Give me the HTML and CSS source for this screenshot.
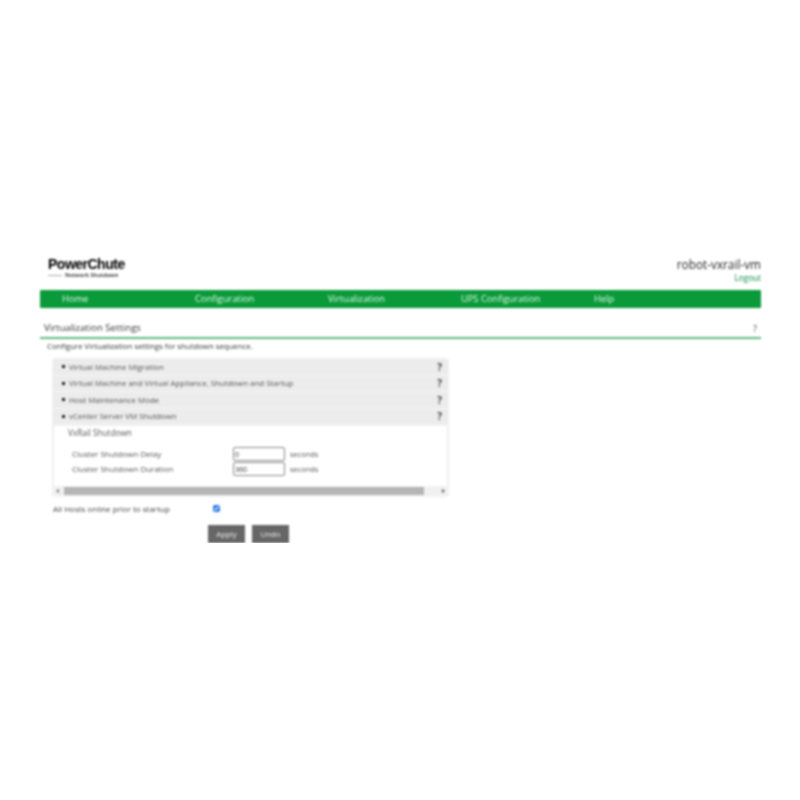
FILE: index.html
```html
<!DOCTYPE html>
<html lang="en">
<head>
<meta charset="utf-8">
<title>PowerChute - Virtualization Settings</title>
<link rel="stylesheet" href="styles.css">
</head>
<body>
<div class="page">
  <header class="top">
    <div class="logo">
      <div class="logo-name">PowerChute</div>
      <div class="logo-sub"><span class="logo-dash"></span>Network Shutdown</div>
    </div>
    <div class="user">
      <div class="host">robot-vxrail-vm</div>
      <a class="logout">Logout</a>
    </div>
  </header>
  <nav class="nav">
    <a class="nav-item">Home</a>
    <a class="nav-item">Configuration</a>
    <a class="nav-item">Virtualization</a>
    <a class="nav-item">UPS Configuration</a>
    <a class="nav-item">Help</a>
  </nav>
  <div class="title-row">
    <h1 class="title">Virtualization Settings</h1>
    <span class="title-help">?</span>
  </div>
  <p class="intro">Configure Virtualization settings for shutdown sequence.</p>
  <section class="panel">
    <div class="acc-row"><span class="acc-label"><span class="bullet"></span>Virtual Machine Migration</span><span class="qm">?</span></div>
    <div class="acc-row"><span class="acc-label"><span class="bullet"></span>Virtual Machine and Virtual Appliance, Shutdown and Startup</span><span class="qm">?</span></div>
    <div class="acc-row"><span class="acc-label"><span class="bullet"></span>Host Maintenance Mode</span><span class="qm">?</span></div>
    <div class="acc-row"><span class="acc-label"><span class="bullet"></span>vCenter Server VM Shutdown</span><span class="qm">?</span></div>
    <div class="acc-body">
      <div class="sub-title">VxRail Shutdown</div>
      <div class="fields">
        <label class="field-label">Cluster Shutdown Delay</label>
        <input class="field-input" type="text" value="0">
        <span class="unit">seconds</span>
        <label class="field-label">Cluster Shutdown Duration</label>
        <input class="field-input" type="text" value="360">
        <span class="unit">seconds</span>
      </div>
    </div>
    <div class="scrollbar">
      <span class="arrow-left"></span>
      <span class="thumb"></span>
      <span class="arrow-right"></span>
    </div>
  </section>
  <div class="check-row">
    <span class="check-label">All Hosts online prior to startup</span>
    <input class="check" type="checkbox" checked>
  </div>
  <div class="actions">
    <button class="btn" type="button">Apply</button>
    <button class="btn" type="button">Undo</button>
  </div>
</div>
</body>
</html>
```

FILE: styles.css
```css
* { box-sizing: border-box; }
html, body { margin: 0; background: #fff; }
body { font-family: "Open Sans", "Liberation Sans", sans-serif; color: #444; }
.page { padding: 255px 39px 0 40px; filter: blur(0.8px); }

.top { display: flex; justify-content: space-between; align-items: flex-start; height: 35px; padding-left: 8px; }
.logo-name { font-family: "Liberation Sans", sans-serif; font-size: 14px; font-weight: 700; line-height: 18px; letter-spacing: -0.5px; color: #000; }
.logo-sub { display: flex; align-items: center; gap: 3px; font-size: 5.5px; font-weight: 700; line-height: 5px; color: #444; white-space: nowrap; }
.logo-dash { width: 14px; height: 1px; background: #aaa; }
.user { text-align: right; }
.host { font-size: 11.8px; line-height: 12px; color: #222; margin-top: 2.5px; }
.logout { display: block; font-size: 8.2px; line-height: 9px; color: #0a8a40; margin-top: 3.2px; }

.nav { display: grid; grid-template-columns: repeat(4, 133px) 1fr; align-items: center; height: 18px; padding-left: 22px; background: #0a9a3a; border-radius: 1px; }
.nav-item { font-size: 9.3px; line-height: 18px; color: #e8fbee; }

.title-row { display: flex; justify-content: space-between; align-items: center; height: 31px; padding: 11px 4px 0 4px; border-bottom: 2px solid #5cb983; }
.title { margin: 0; font-size: 9.6px; font-weight: 400; line-height: 14px; color: #333; }
.title-help { font-size: 9px; color: #444; }
.intro { margin: 2px 0 0 7px; font-size: 7.8px; line-height: 10px; color: #333; }

.panel { width: 395px; margin: 8px 0 0 13px; box-shadow: 0 0 2px #ddd; }
.acc-row { display: flex; justify-content: space-between; align-items: center; height: 16.5px; padding: 0 6px 0 9px; background: #ececec; border-bottom: 1px solid #f6f6f6; }
.acc-label { display: flex; align-items: center; gap: 4px; font-size: 7.9px; color: #555; white-space: nowrap; }
.bullet { width: 3px; height: 3px; background: #222; }
.qm { font-size: 10px; font-weight: 700; color: #444; }

.acc-body { height: 61px; padding: 1px 0 0 14px; background: #fff; border: 1px solid #eee; border-bottom: 0; }
.sub-title { font-size: 8.2px; line-height: 12px; color: #555; }
.fields { display: grid; grid-template-columns: 157px 53px auto; column-gap: 4px; row-gap: 1px; align-items: center; justify-content: start; margin-top: 8px; padding-left: 4px; }
.field-label { font-size: 8px; line-height: 12px; color: #555; }
.field-input { width: 52px; height: 14px; padding: 0 1px; border: 1px solid #888; border-radius: 2px; font-family: inherit; font-size: 7px; color: #333; background: #fff; }
.unit { font-size: 7.4px; color: #555; }

.scrollbar { display: flex; align-items: center; height: 10px; padding: 0 3px; background: #f1f1f1; }
.thumb { flex: 1; height: 8px; margin: 0 18px 0 5px; background: #b5b5b5; }
.arrow-left { border-style: solid; border-width: 2px 3px 2px 0; border-color: transparent #777 transparent transparent; }
.arrow-right { border-style: solid; border-width: 2px 0 2px 3px; border-color: transparent transparent transparent #555; }

.check-row { display: flex; align-items: center; height: 12px; margin: 6px 0 0 13px; }
.check-label { width: 160px; font-size: 8px; color: #444; white-space: nowrap; }
.check { width: 7px; height: 7px; margin: 0; accent-color: #1a73e8; }

.actions { display: flex; gap: 7px; margin: 11px 0 0 168px; }
.btn { width: 37px; height: 18px; padding: 0; border: 0; background: #666; color: #eee; font-family: inherit; font-size: 7.8px; }
```
